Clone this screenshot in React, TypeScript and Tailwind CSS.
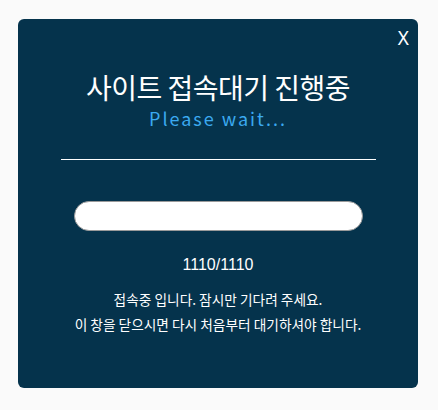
export default function App() {
  const font = { fontFamily: '"Noto Sans CJK KR", "Noto Sans", sans-serif' };
  return (
    <div className="w-[438px] h-[410px] bg-[#fafafa] pt-[19px] pl-[18px]" style={font}>
      <div className="relative w-[400px] h-[369px] rounded-[6px] bg-[#05334c] flex flex-col items-center text-white">
        <div className="absolute right-[9px] top-[10px] text-[19px] leading-none" style={{ fontFamily: '"Noto Sans", sans-serif' }}>X</div>
        <div className="mt-[48px] text-[28px] leading-[40px] tracking-[-0.5px]">사이트 접속대기 진행중</div>
        <div className="text-[18px] leading-[22px] tracking-[2px] text-[#3ba9f0]">Please wait...</div>
        <div className="mt-[30px] w-[315px] h-px bg-white" />
        <div className="mt-[41px] w-[289px] h-[30px] rounded-full bg-white border border-[#9a9a9a]" />
        <div className="mt-[23px] text-[16px] leading-[22px]" style={{ fontFamily: '"Liberation Sans", sans-serif' }}>1110/1110</div>
        <div className="mt-[11px] text-[13.7px] leading-[25px] text-center">
          <div>접속중 입니다. 잠시만 기다려 주세요.</div>
          <div>이 창을 닫으시면 다시 처음부터 대기하셔야 합니다.</div>
        </div>
      </div>
    </div>
  );
}
